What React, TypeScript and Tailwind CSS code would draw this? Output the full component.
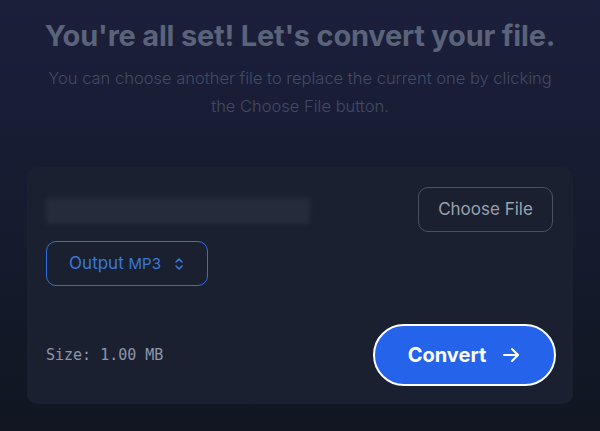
import React from "react";

function ChevronUpDown() {
  return (
    <svg width="12" height="14" viewBox="0 0 12 14" fill="none" stroke="currentColor" strokeWidth="1.6" strokeLinecap="round" strokeLinejoin="round">
      <path d="M3 5l3-3 3 3" />
      <path d="M3 9l3 3 3-3" />
    </svg>
  );
}

function ArrowRight() {
  return (
    <svg width="20" height="20" viewBox="0 0 20 20" fill="none" stroke="currentColor" strokeWidth="2" strokeLinecap="round" strokeLinejoin="round">
      <path d="M3 10h14" />
      <path d="M11 4l6 6-6 6" />
    </svg>
  );
}

export default function App() {
  return (
    <div className="w-[600px] h-[431px] overflow-hidden bg-gradient-to-b from-[#1b1f3b] via-[#161b2f] to-[#111622] font-['Inter',sans-serif] flex flex-col items-center">
      <h1 className="mt-[20px] text-[29px] leading-[32px] font-bold text-[#5b6379] tracking-[-0.2px]">
        You're all set! Let's convert your file.
      </h1>
      <p className="mt-[12px] text-center text-[16.5px] leading-[28px] text-[#434b64] font-light">
        You can choose another file to replace the current one by clicking
        <br />
        the Choose File button.
      </p>

      <div className="mt-[47px] w-[546px] rounded-[10px] bg-[#1b2030] pl-[19px] pr-[17px] pt-[20px] pb-[18px] flex flex-col">
        <div className="flex items-start justify-between">
          <div className="flex flex-col">
            <div className="mt-[11px] h-[26px] w-[264px] bg-[#262b3b] blur-[2px]" />
            <button className="mt-[17px] h-[45px] w-[162px] rounded-[10px] border border-[#2f6fe0] flex items-center justify-center gap-[12px] text-[#3a78d8]">
              <span className="text-[17px]">
                Output <span className="text-[15px]">MP3</span>
              </span>
              <ChevronUpDown />
            </button>
          </div>
          <button className="mr-[3px] h-[45px] w-[135px] rounded-[10px] border border-[#4a5161] text-[17px] text-[#9aa1ad]">
            Choose File
          </button>
        </div>
        <div className="mt-[38px] flex items-center justify-between">
          <span className="font-['DejaVu_Sans_Mono',monospace] text-[15px] text-[#8d96a8]">Size: 1.00 MB</span>
          <button className="h-[62px] w-[183px] rounded-full border-2 border-white bg-[#2563eb] flex items-center justify-center gap-[15px] text-white">
            <span className="text-[20px] font-bold">Convert</span>
            <ArrowRight />
          </button>
        </div>
      </div>
    </div>
  );
}
